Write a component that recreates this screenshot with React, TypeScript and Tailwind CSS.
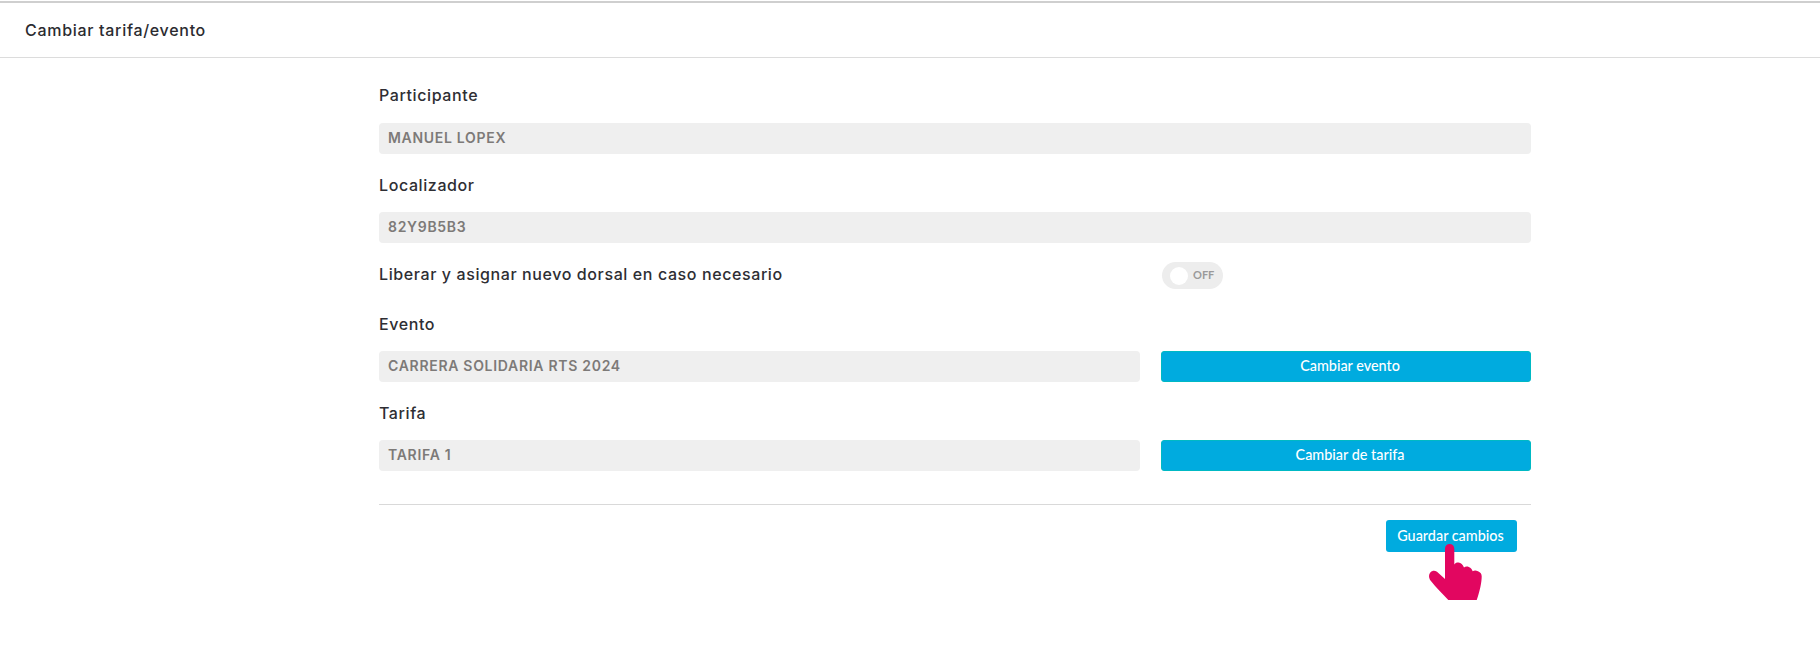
import React from "react";

const MONT = "font-['Inter','Noto_Sans',sans-serif]";
const LATO = "font-['Lato',sans-serif]";

function Label({ children }: { children: React.ReactNode }) {
  return (
    <div className={`${MONT} h-6 leading-6 text-[16px] font-medium tracking-[0.6px] text-[#2e2e33]`}>
      {children}
    </div>
  );
}

function Field({ value }: { value: string }) {
  return (
    <div className={`${MONT} h-[31px] flex items-center px-[9px] pb-[2px] rounded-[4px] bg-[#efefef] text-[14px] font-semibold tracking-[0.7px] text-[#7d7a78]`}>
      {value}
    </div>
  );
}

function ActionButton({ children }: { children: React.ReactNode }) {
  return (
    <button className={`${LATO} h-[31px] pl-2 pb-px w-full rounded-[3px] border border-[#00b9c4] bg-[#00abdf] text-white text-[14.4px] font-medium`}>
      {children}
    </button>
  );
}

function Hand() {
  return (
    <svg
      className="absolute left-[43px] top-[24px] w-[53px] h-[56px]"
      viewBox="0 0 53 56"
      fill="#e20660"
    >
      <path d="M16 4.6C16 1.8 18 0 20.6 0C23.3 0 25.3 1.8 25.3 4.6V20.5C26.5 18.8 28 18.4 29.5 18.6C32 18.9 33.8 20.6 35 23.5C36.2 22.4 38 22.2 39.8 22.9C42 23.8 43 25.3 43.7 27.3C45 26.4 47 26.4 49 27.2C51.6 28.3 52.7 29.8 52.7 32.5C52.7 38 51 47 47.7 56H19.3C14 50 7 43.5 1.5 36.5C-0.6 33.8 -0.3 30.4 1.5 28.3C3.3 26.5 5.7 26.3 8 27.8L16 35Z" />
    </svg>
  );
}

export default function App() {
  return (
    <div className="min-h-[668px] bg-white pt-px">
      <div className="h-[2px] bg-[#cfcfcf]" />
      <header className="h-[54px] flex items-center pl-[25px] border-b border-[#dcdcdc] box-content">
        <h1 className={`${MONT} text-[16px] font-medium tracking-[0.7px] text-[#2b2b30]`}>Cambiar tarifa/evento</h1>
      </header>

      <main className="ml-[379px] w-[1152px] pt-[25px]">
        <Label>Participante</Label>
        <div className="mt-[16px]"><Field value="MANUEL LOPEX" /></div>

        <div className="mt-[19px]"><Label>Localizador</Label></div>
        <div className="mt-[15px]"><Field value="82Y9B5B3" /></div>

        <div className="mt-[19px] grid grid-cols-[783px_1fr] items-center">
          <div className="-mt-[3px]"><Label>Liberar y asignar nuevo dorsal en caso necesario</Label></div>
          <div className={`${LATO} h-[27px] w-[61px] rounded-full bg-[#ededed] flex items-center pl-2 gap-[5px] text-[11px] font-bold text-[#9a9a9a]`}>
            <span className="w-[18px] h-[18px] rounded-full bg-white" />
            <span>OFF</span>
          </div>
        </div>

        <div className="mt-[23px]"><Label>Evento</Label></div>
        <div className="mt-[15px] grid grid-cols-[761px_370px] gap-[21px] items-start">
          <Field value="CARRERA SOLIDARIA RTS 2024" />
          <ActionButton>Cambiar evento</ActionButton>
        </div>

        <div className="mt-[19px]"><Label>Tarifa</Label></div>
        <div className="mt-[15px] grid grid-cols-[761px_370px] gap-[21px] items-start">
          <Field value="TARIFA 1" />
          <ActionButton>Cambiar de tarifa</ActionButton>
        </div>

        <div className="mt-[33px] border-t border-[#d9d9d9]" />

        <div className="mt-[15px] flex justify-end pr-[14px]">
          <div className="relative w-[131px]">
            <button className={`${LATO} h-8 pb-px pr-[2px] w-full rounded-[3px] bg-[#00abdf] text-white text-[14.4px] font-medium`}>
              Guardar cambios
            </button>
            <Hand />
          </div>
        </div>
      </main>
    </div>
  );
}
